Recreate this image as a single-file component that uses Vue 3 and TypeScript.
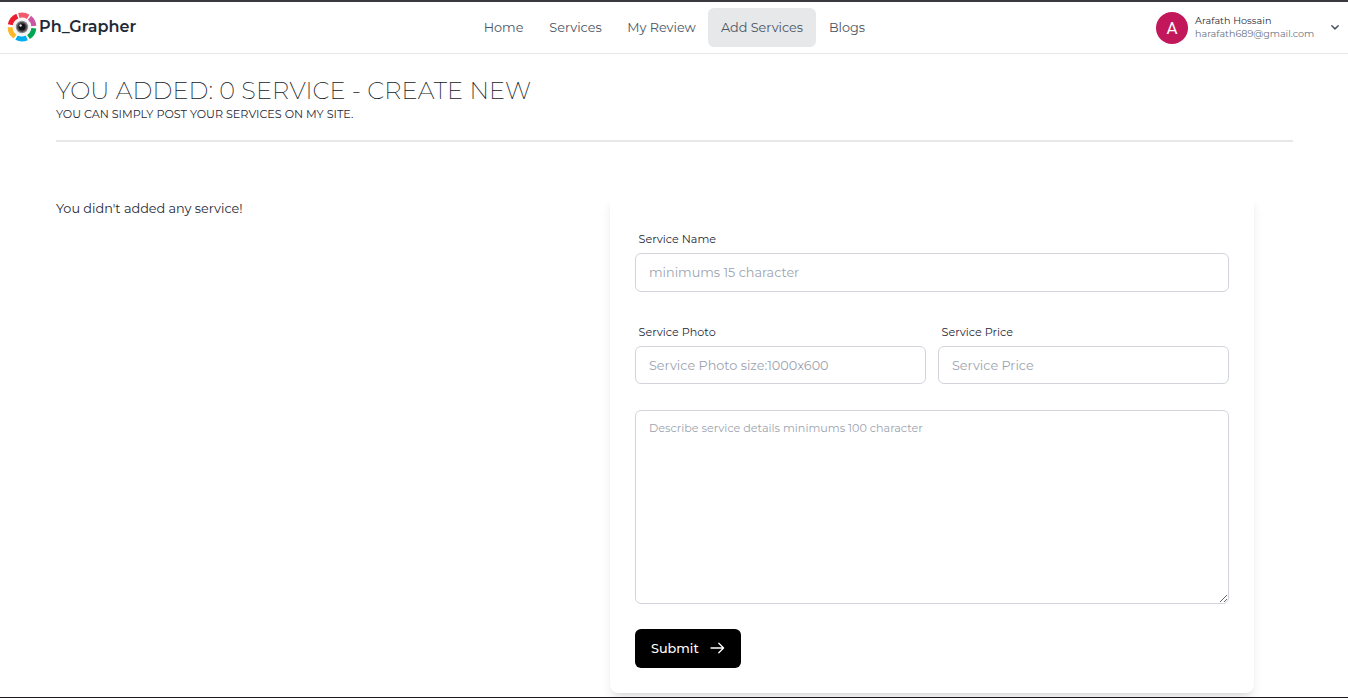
<script setup lang="ts">
import { ref } from 'vue'

interface NavItem {
  label: string
  key: string
}

const navItems: NavItem[] = [
  { label: 'Home', key: 'home' },
  { label: 'Services', key: 'services' },
  { label: 'My Review', key: 'review' },
  { label: 'Add Services', key: 'add' },
  { label: 'Blogs', key: 'blogs' },
]
const active = ref('add')
const serviceCount = ref(0)
const name = ref('')
const photo = ref('')
const price = ref('')
const details = ref('')
</script>

<template>
  <div class="page">
    <header class="header">
      <a class="brand">
        <svg class="logo" viewBox="0 0 30 30" aria-hidden="true">
          <g fill="none" stroke-width="5">
            <path d="M3.3 12.8A11.9 11.9 0 0 1 10.3 4.1" stroke="#ed1c2e" />
            <path d="M11.8 3.5A11.9 11.9 0 0 1 21.2 4.8" stroke="#f15b6c" />
            <path d="M22.5 5.7A11.9 11.9 0 0 1 26.8 14" stroke="#c957a3" />
            <path d="M26.8 16.2A11.9 11.9 0 0 1 21.5 25" stroke="#00a651" />
            <path d="M19.8 25.9A11.9 11.9 0 0 1 9.5 25.6" stroke="#00aeef" />
            <path d="M8 24.6A11.9 11.9 0 0 1 3.1 15.2" stroke="#fdb827" />
          </g>
          <circle cx="15" cy="15" r="9" fill="#f4f4f4" />
          <circle cx="15" cy="15" r="6.2" fill="#8a8a8d" />
          <circle cx="15" cy="15" r="5" fill="#48484b" />
          <circle cx="15" cy="15" r="3.4" fill="#111114" />
          <circle cx="13.6" cy="13.5" r="1.2" fill="#e4e4e8" />
        </svg>
        <span class="brand-name">Ph_Grapher</span>
      </a>
      <nav class="nav">
        <a
          v-for="item in navItems"
          :key="item.key"
          class="nav-item"
          :class="[item.key, { active: active === item.key }]"
          @click="active = item.key"
        ><span>{{ item.label }}</span></a>
      </nav>
      <div class="user">
        <div class="avatar">A</div>
        <div class="identity">
          <span class="user-name">Arafath Hossain</span>
          <span class="user-mail">harafath689@gmail.com</span>
        </div>
        <svg class="chevron" viewBox="0 0 10 7" aria-hidden="true">
          <path d="M1.8 1.8 5 4.9 8.2 1.8" fill="none" stroke="#4b5563" stroke-width="1.5" stroke-linecap="round" stroke-linejoin="round" />
        </svg>
      </div>
    </header>

    <main class="main">
      <div class="intro">
        <h1 class="title">YOU ADDED: {{ serviceCount }} SERVICE - CREATE NEW</h1>
        <p class="subtitle">YOU CAN SIMPLY POST YOUR SERVICES ON MY SITE.</p>
      </div>
      <div class="columns">
        <p class="empty">You didn't added any service!</p>
        <form class="card" @submit.prevent>
          <div class="field">
            <label class="label" for="name">Service Name</label>
            <input id="name" v-model="name" class="input" placeholder="minimums 15 character" />
          </div>
          <div class="row">
            <div class="field">
              <label class="label" for="photo">Service Photo</label>
              <input id="photo" v-model="photo" class="input" placeholder="Service Photo size:1000x600" />
            </div>
            <div class="field">
              <label class="label" for="price">Service Price</label>
              <input id="price" v-model="price" class="input" placeholder="Service Price" />
            </div>
          </div>
          <textarea v-model="details" class="input area" placeholder="Describe service details minimums 100 character"></textarea>
          <button class="submit" type="submit">
            <span>Submit</span>
            <svg class="arrow" viewBox="0 0 15 12" aria-hidden="true">
              <path d="M1 6H13.6M8.8 1.2 13.6 6 8.8 10.8" fill="none" stroke="#fff" stroke-width="1.3" stroke-linecap="round" stroke-linejoin="round" />
            </svg>
          </button>
        </form>
      </div>
    </main>
  </div>
</template>

<style>
body {
  margin: 0;
  background: #fff;
  overflow: hidden;
}
</style>

<style scoped>
.page {
  box-sizing: border-box;
  height: 698px;
  overflow: hidden;
  display: flex;
  flex-direction: column;
  border-top: 2px solid #3b383e;
  border-bottom: 1px solid #1c1a1d;
  font-family: Montserrat, Inter, "Liberation Sans", sans-serif;
  font-weight: 400;
  color: #1f2937;
}
.header {
  box-sizing: border-box;
  flex: none;
  height: 52px;
  border-bottom: 1px solid #e5e7eb;
  display: grid;
  grid-template-columns: 471px 407px 1fr;
  align-items: center;
}
.brand {
  display: flex;
  align-items: center;
  padding-left: 7px;
}
.logo {
  width: 30px;
  height: 30px;
  margin-top: -1px;
}
.brand-name {
  margin: -2px 0 0 2px;
  font-size: 16px;
  font-weight: 600;
  line-height: 20px;
  letter-spacing: 0.05px;
}
.nav {
  display: flex;
}
.nav-item {
  box-sizing: border-box;
  height: 39px;
  border-radius: 6px;
  display: flex;
  align-items: center;
  justify-content: center;
  font-size: 12.8px;
  line-height: 19px;
  color: #4b5563;
  white-space: nowrap;
  cursor: pointer;
}
.home { width: 65px; }
.services { width: 79px; }
.review { width: 93px; }
.add { width: 108px; }
.blogs { width: 62px; }
.active {
  background: #e7e8ea;
}
.user {
  display: flex;
  align-items: center;
  padding: 0 8px 0 278px;
}
.avatar {
  width: 32px;
  height: 32px;
  border-radius: 50%;
  background: #c2185b;
  color: #fff;
  font: 400 17px/33px Roboto, sans-serif;
  text-align: center;
}
.identity {
  flex: 1;
  margin: -2px 0 0 7px;
  display: flex;
  flex-direction: column;
  font-size: 9.6px;
  line-height: 13px;
}
.user-name {
  letter-spacing: 0.06px;
  color: #1f2937;
}
.user-mail {
  color: #6b7280;
}
.chevron {
  width: 10px;
  height: 7px;
}
.main {
  padding: 0 55px 0 56px;
}
.intro {
  height: 86px;
  border-bottom: 2px solid #e7e7e7;
}
.title {
  margin: 0;
  padding-top: 21px;
  font-size: 24px;
  font-weight: 200;
  line-height: 32px;
  letter-spacing: 0.11px;
  color: #111827;
  white-space: nowrap;
}
.subtitle {
  margin: 0;
  font-size: 11.2px;
  line-height: 15px;
}
.columns {
  display: grid;
  grid-template-columns: 554px 644px;
  padding-top: 51px;
}
.empty {
  margin: 0;
  padding-top: 6px;
  font-size: 12.8px;
  line-height: 20px;
}
.card {
  box-sizing: border-box;
  height: 500px;
  padding: 38px 25px 25px;
  border-radius: 8px;
  box-shadow: 0 8px 12px -2px rgba(0, 0, 0, 0.1), 0 3px 5px -3px rgba(0, 0, 0, 0.1);
  display: flex;
  flex-direction: column;
}
.field {
  display: flex;
  flex-direction: column;
}
.label {
  padding-left: 3.5px;
  height: 22px;
  font-size: 11.2px;
  line-height: 16px;
}
.input {
  box-sizing: border-box;
  width: 100%;
  height: 39px;
  margin: 0;
  padding: 0 13px 1px;
  border: 1px solid #d1d5db;
  border-radius: 6px;
  outline: none;
  background: #fff;
  font-family: inherit;
  font-size: 12.8px;
  font-weight: 400;
  color: #1f2937;
}
.input::placeholder {
  color: #9ca3af;
  opacity: 1;
}
.row {
  display: grid;
  grid-template-columns: 1fr 1fr;
  gap: 12px;
  margin: 32px 0 26px;
}
.row .input {
  height: 38px;
  padding-bottom: 0;
}
.area {
  flex: none;
  height: 194px;
  padding: 9px 13px;
  font-size: 11.2px;
  line-height: 16px;
  resize: both;
}
.submit {
  flex: none;
  margin-top: 25px;
  width: 106px;
  height: 39px;
  padding: 0 16px 1px;
  border: 0;
  border-radius: 6px;
  background: #000;
  color: #fff;
  font-family: inherit;
  font-size: 12.8px;
  font-weight: 500;
  display: flex;
  align-items: center;
  justify-content: space-between;
}
.arrow {
  width: 15px;
  height: 12px;
}
</style>
